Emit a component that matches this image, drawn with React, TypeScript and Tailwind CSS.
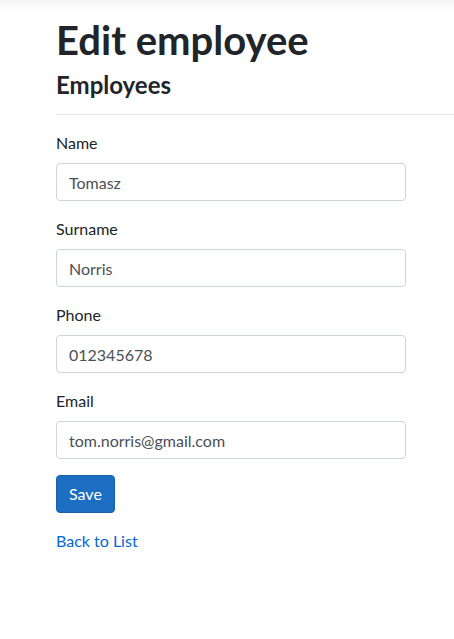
const font = { fontFamily: '"Lato", "Liberation Sans", sans-serif' };

const fields = [
  { label: "Name", value: "Tomasz" },
  { label: "Surname", value: "Norris" },
  { label: "Phone", value: "012345678" },
  { label: "Email", value: "tom.norris@gmail.com" },
];

export default function App() {
  return (
    <div className="min-h-[639px] bg-white text-[#212529]" style={font}>
      <div className="h-[12px] bg-gradient-to-b from-[#f4f4f4] to-white" />
      <div className="pl-[56px]">
        <h1 className="text-[40px] font-bold leading-[48px] mt-[4px]">Edit employee</h1>
        <h3 className="text-[24px] font-bold leading-[29px] mt-[6px]">Employees</h3>
        <hr className="mt-[15px] border-t border-[#e5e5e5]" />

        <form className="w-[350px] pt-[16px]">
          {fields.map((f) => (
            <div key={f.label} className="mb-[16px]">
              <label className="block text-[16px] leading-[24px] mb-[8px]">{f.label}</label>
              <input
                defaultValue={f.value}
                className="block w-full h-[38px] px-[12px] text-[16px] text-[#495057] border border-[#ced4da] rounded-[4px] outline-none"
              />
            </div>
          ))}
          <button
            type="button"
            className="h-[38px] px-[12px] text-[16px] text-white bg-[#1b6ec2] border border-[#1861ac] rounded-[4px]"
          >
            Save
          </button>
        </form>

        <div className="mt-[16px]">
          <a href="#" className="text-[16px] leading-[24px] text-[#0366d6]">
            Back to List
          </a>
        </div>
      </div>
    </div>
  );
}
